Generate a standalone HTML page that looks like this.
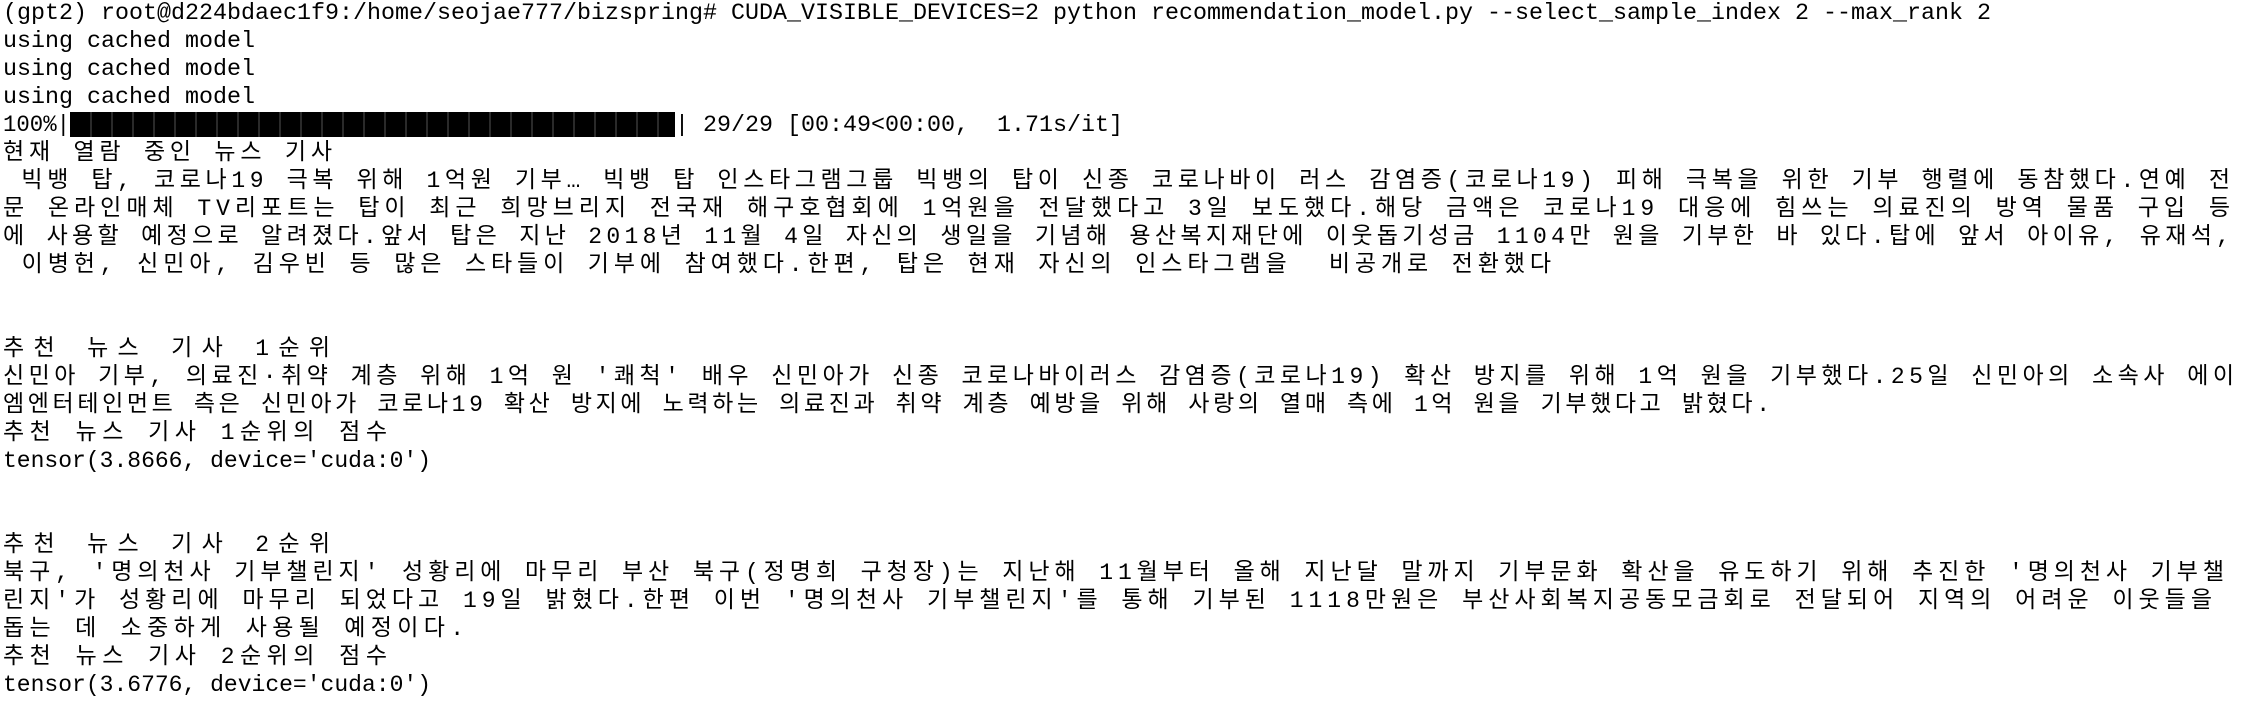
<!DOCTYPE html>
<html><head><meta charset="utf-8"><style>
html,body{margin:0;padding:0;background:#fff;width:2246px;height:712px;overflow:hidden}
svg{display:block}
text{font-family:"Liberation Mono","Noto Sans CJK KR","NanumGothic",monospace;font-size:23px;fill:#000;white-space:pre}
</style></head><body>
<svg width="2246" height="712" xmlns="http://www.w3.org/2000/svg" xml:space="preserve">
<text x="3" y="19" textLength="1988" lengthAdjust="spacingAndGlyphs">(gpt2) root@d224bdaec1f9:/home/seojae777/bizspring# CUDA_VISIBLE_DEVICES=2 python recommendation_model.py --select_sample_index 2 --max_rank 2</text>
<text x="3" y="47" textLength="252" lengthAdjust="spacingAndGlyphs">using cached model</text>
<text x="3" y="75" textLength="252" lengthAdjust="spacingAndGlyphs">using cached model</text>
<text x="3" y="103" textLength="252" lengthAdjust="spacingAndGlyphs">using cached model</text>
<text x="3" y="131" textLength="67" lengthAdjust="spacingAndGlyphs">100%|</text>
<rect x="70" y="112" width="605" height="25" fill="#000"/>
<g stroke="#555" stroke-width="1">
<path d="M91 112v25M112 112v25M133 112v25M154 112v25M175 112v25M196 112v25M217 112v25M238 112v25M259 112v25M280 112v25M301 112v25M322 112v25M343 112v25M364 112v25M385 112v25M406 112v25M427 112v25M448 112v25M469 112v25M490 112v25M511 112v25M532 112v25M553 112v25M574 112v25M595 112v25M616 112v25M637 112v25M658 112v25"/>
</g>
<text x="675" y="131" textLength="448" lengthAdjust="spacingAndGlyphs">| 29/29 [00:49&lt;00:00,  1.71s/it]</text>
<text x="3" y="159" textLength="329" lengthAdjust="spacing">현재 열람 중인 뉴스 기사</text>
<text x="3" y="187" textLength="2227" lengthAdjust="spacing"> 빅뱅 탑, 코로나19 극복 위해 1억원 기부… 빅뱅 탑 인스타그램그룹 빅뱅의 탑이 신종 코로나바이 러스 감염증(코로나19) 피해 극복을 위한 기부 행렬에 동참했다.연예 전</text>
<text x="3" y="215" textLength="2227" lengthAdjust="spacing">문 온라인매체 TV리포트는 탑이 최근 희망브리지 전국재 해구호협회에 1억원을 전달했다고 3일 보도했다.해당 금액은 코로나19 대응에 힘쓰는 의료진의 방역 물품 구입 등</text>
<text x="3" y="243" textLength="2227" lengthAdjust="spacing">에 사용할 예정으로 알려졌다.앞서 탑은 지난 2018년 11월 4일 자신의 생일을 기념해 용산복지재단에 이웃돕기성금 1104만 원을 기부한 바 있다.탑에 앞서 아이유, 유재석,</text>
<text x="3" y="271" textLength="1548" lengthAdjust="spacing"> 이병헌, 신민아, 김우빈 등 많은 스타들이 기부에 참여했다.한편, 탑은 현재 자신의 인스타그램을  비공개로 전환했다</text>
<text x="3" y="355" textLength="327" lengthAdjust="spacing">추천 뉴스 기사 1순위</text>
<text x="3" y="383" textLength="2231" lengthAdjust="spacing">신민아 기부, 의료진·취약 계층 위해 1억 원 '쾌척' 배우 신민아가 신종 코로나바이러스 감염증(코로나19) 확산 방지를 위해 1억 원을 기부했다.25일 신민아의 소속사 에이</text>
<text x="3" y="411" textLength="1767" lengthAdjust="spacing">엠엔터테인먼트 측은 신민아가 코로나19 확산 방지에 노력하는 의료진과 취약 계층 예방을 위해 사랑의 열매 측에 1억 원을 기부했다고 밝혔다.</text>
<text x="3" y="439" textLength="384" lengthAdjust="spacing">추천 뉴스 기사 1순위의 점수</text>
<text x="3" y="467" textLength="428" lengthAdjust="spacingAndGlyphs">tensor(3.8666, device='cuda:0')</text>
<text x="3" y="551" textLength="327" lengthAdjust="spacing">추천 뉴스 기사 2순위</text>
<text x="3" y="579" textLength="2221" lengthAdjust="spacing">북구, '명의천사 기부챌린지' 성황리에 마무리 부산 북구(정명희 구청장)는 지난해 11월부터 올해 지난달 말까지 기부문화 확산을 유도하기 위해 추진한 '명의천사 기부챌</text>
<text x="3" y="607" textLength="2209" lengthAdjust="spacing">린지'가 성황리에 마무리 되었다고 19일 밝혔다.한편 이번 '명의천사 기부챌린지'를 통해 기부된 1118만원은 부산사회복지공동모금회로 전달되어 지역의 어려운 이웃들을</text>
<text x="3" y="635" textLength="461" lengthAdjust="spacing">돕는 데 소중하게 사용될 예정이다.</text>
<text x="3" y="663" textLength="384" lengthAdjust="spacing">추천 뉴스 기사 2순위의 점수</text>
<text x="3" y="691" textLength="428" lengthAdjust="spacingAndGlyphs">tensor(3.6776, device='cuda:0')</text>
</svg>
</body></html>
